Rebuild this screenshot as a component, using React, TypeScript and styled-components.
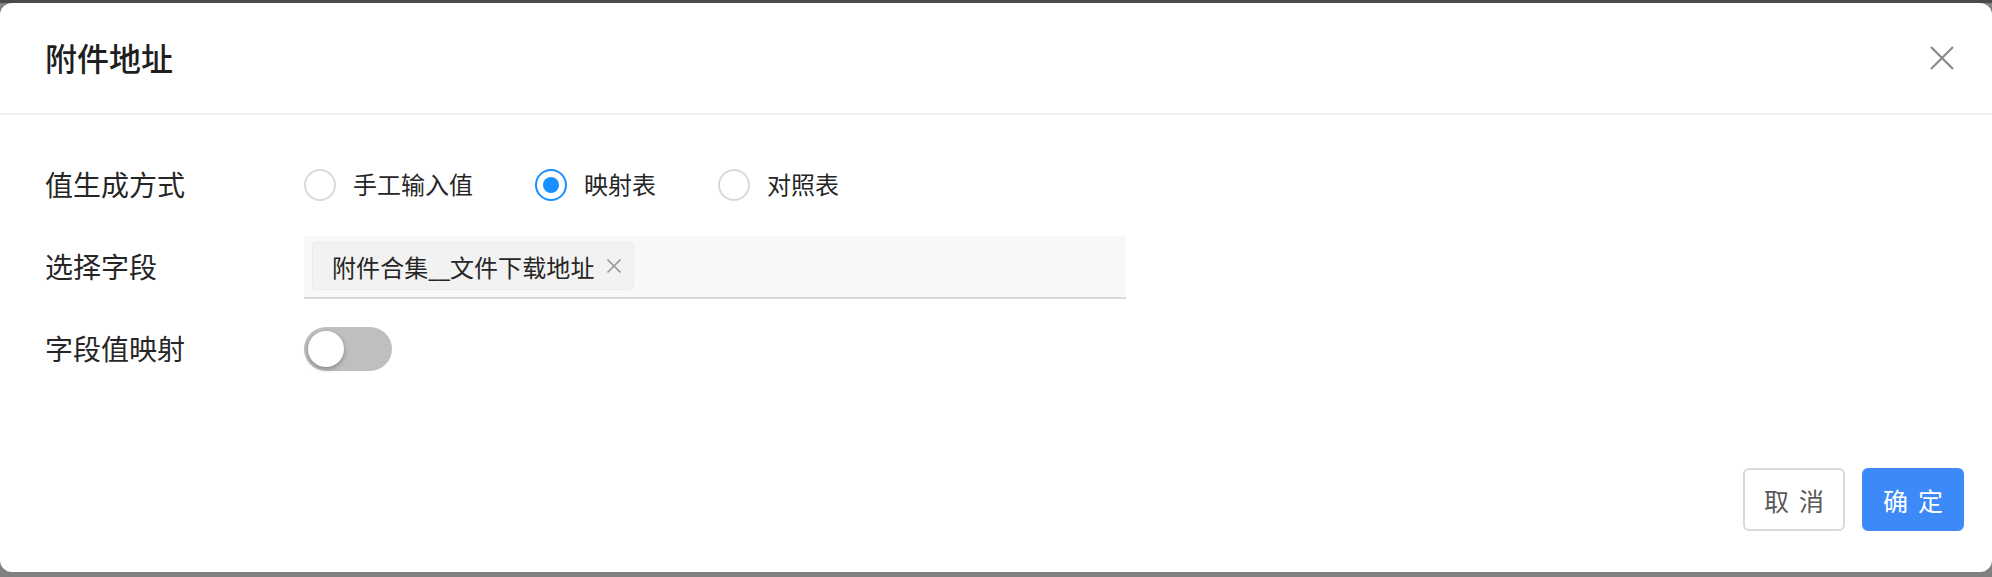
import React, { useState } from "react";
import styled, { createGlobalStyle } from "styled-components";

const GlobalStyle = createGlobalStyle`
  html, body {
    margin: 0;
    padding: 0;
  }
  body {
    font-family: "Noto Sans", "Noto Sans CJK SC", sans-serif;
    background: #808080;
  }
`;

type Mode = "manual" | "mapping" | "compare";

const modes: { key: Mode; label: string }[] = [
  { key: "manual", label: "手工输入值" },
  { key: "mapping", label: "映射表" },
  { key: "compare", label: "对照表" },
];

export default function App() {
  const [mode, setMode] = useState<Mode>("mapping");
  const [mapOn, setMapOn] = useState(false);
  const [fields, setFields] = useState<string[]>(["附件合集__文件下载地址"]);

  return (
    <Page>
      <GlobalStyle />
      <Modal>
        <Header>
          <Title>附件地址</Title>
          <CloseBtn aria-label="close">
            <svg width="24" height="24" viewBox="0 0 24 24">
              <path d="M1 1L23 23M23 1L1 23" stroke="#8a8a8a" strokeWidth="2.2" fill="none" />
            </svg>
          </CloseBtn>
        </Header>

        <Body>
          <Row>
            <Label>值生成方式</Label>
            <RadioGroup>
              {modes.map((m) => (
                <RadioItem key={m.key} onClick={() => setMode(m.key)}>
                  <RadioCircle $checked={mode === m.key} />
                  <RadioText>{m.label}</RadioText>
                </RadioItem>
              ))}
            </RadioGroup>
          </Row>

          <Row>
            <Label>选择字段</Label>
            <Select>
              {fields.map((f) => (
                <Tag key={f}>
                  <TagText>{f}</TagText>
                  <TagClose onClick={() => setFields(fields.filter((x) => x !== f))}>
                    <svg width="16" height="16" viewBox="0 0 16 16">
                      <path d="M1.5 1.5L14.5 14.5M14.5 1.5L1.5 14.5" stroke="#999" strokeWidth="1.7" fill="none" />
                    </svg>
                  </TagClose>
                </Tag>
              ))}
            </Select>
          </Row>

          <Row>
            <Label>字段值映射</Label>
            <Switch $on={mapOn} onClick={() => setMapOn(!mapOn)}>
              <Knob />
            </Switch>
          </Row>
        </Body>

        <Footer>
          <Btn>取消</Btn>
          <Btn $primary>确定</Btn>
        </Footer>
      </Modal>
    </Page>
  );
}

const Page = styled.div`
  min-height: 577px;
  padding-top: 3px;
  box-sizing: border-box;
  background: linear-gradient(#4a4a4a 0 3px, #808080 3px);
`;

const Modal = styled.div`
  height: 569px;
  background: #fff;
  border-radius: 12px;
  display: flex;
  flex-direction: column;
`;

const Header = styled.div`
  height: 112px;
  box-sizing: border-box;
  border-bottom: 2px solid #f0f0f0;
  display: flex;
  align-items: center;
  justify-content: space-between;
  padding: 0 38px 0 45px;
`;

const Title = styled.div`
  font-size: 32px;
  font-weight: 500;
  color: #1f1f1f;
  line-height: 40px;
  margin-top: 2px;
`;

const CloseBtn = styled.button`
  border: none;
  background: none;
  padding: 0;
  width: 24px;
  height: 24px;
  cursor: pointer;
  display: flex;
`;

const Body = styled.div`
  flex: 1;
  padding: 29px 45px 0;
`;

const Row = styled.div`
  height: 82px;
  display: flex;
  align-items: center;
`;

const Label = styled.div`
  width: 259px;
  flex-shrink: 0;
  font-size: 28px;
  color: #262626;
  line-height: 36px;
`;

const RadioGroup = styled.div`
  display: flex;
  align-items: center;
`;

const RadioItem = styled.label`
  display: flex;
  align-items: center;
  gap: 17px;
  margin-right: 62px;
  cursor: pointer;
`;

const RadioCircle = styled.span<{ $checked: boolean }>`
  width: 32px;
  height: 32px;
  box-sizing: border-box;
  border-radius: 50%;
  border: 2px solid ${({ $checked }) => ($checked ? "#1890ff" : "#d9d9d9")};
  display: flex;
  align-items: center;
  justify-content: center;

  &::after {
    content: "";
    width: 16px;
    height: 16px;
    border-radius: 50%;
    background: #1890ff;
    display: ${({ $checked }) => ($checked ? "block" : "none")};
  }
`;

const RadioText = styled.span`
  font-size: 24px;
  color: #262626;
  line-height: 32px;
`;

const Select = styled.div`
  width: 822px;
  height: 63px;
  box-sizing: border-box;
  background: #f8f8f8;
  border-bottom: 2px solid #d9d9d9;
  padding-left: 8px;
  display: flex;
  align-items: center;
`;

const Tag = styled.div`
  height: 48px;
  box-sizing: border-box;
  display: flex;
  align-items: center;
  gap: 11px;
  padding: 0 11px 0 19px;
  background: #f2f2f2;
  border: 1px solid #ebebeb;
  border-radius: 4px;
`;

const TagText = styled.span`
  font-size: 24px;
  color: #262626;
  letter-spacing: 0.1px;
`;

const TagClose = styled.span`
  display: flex;
  cursor: pointer;
`;

const Switch = styled.button<{ $on: boolean }>`
  width: 88px;
  height: 44px;
  border: none;
  border-radius: 22px;
  background: ${({ $on }) => ($on ? "#1890ff" : "#bfbfbf")};
  display: flex;
  align-items: center;
  justify-content: ${({ $on }) => ($on ? "flex-end" : "flex-start")};
  padding: 0 4px;
  cursor: pointer;
`;

const Knob = styled.span`
  width: 36px;
  height: 36px;
  border-radius: 50%;
  background: #fff;
  box-shadow: 0 2px 5px rgba(0, 0, 0, 0.3);
`;

const Footer = styled.div`
  display: flex;
  justify-content: flex-end;
  gap: 17px;
  padding: 0 28px 41px;
`;

const Btn = styled.button<{ $primary?: boolean }>`
  width: 102px;
  height: 63px;
  box-sizing: border-box;
  border-radius: 6px;
  font-family: "Noto Sans", "Noto Sans CJK SC", sans-serif;
  font-size: 25px;
  letter-spacing: 10px;
  text-indent: 10px;
  cursor: pointer;
  border: 2px solid ${({ $primary }) => ($primary ? "#3d89f8" : "#d9d9d9")};
  background: ${({ $primary }) => ($primary ? "#3d89f8" : "#fff")};
  color: ${({ $primary }) => ($primary ? "#fff" : "#595959")};
`;
